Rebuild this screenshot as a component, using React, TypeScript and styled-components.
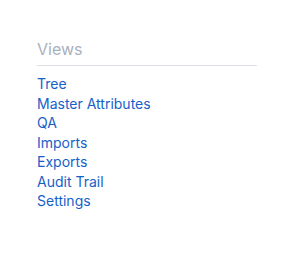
import styled, { createGlobalStyle } from "styled-components";

const GlobalStyle = createGlobalStyle`
  body {
    margin: 0;
    background: #ffffff;
    font-family: Inter, "Noto Sans", sans-serif;
  }
`;

const links = [
  "Tree",
  "Master Attributes",
  "QA",
  "Imports",
  "Exports",
  "Audit Trail",
  "Settings",
];

const App = () => {
  return (
    <>
      <GlobalStyle />
      <Panel>
        <Title>Views</Title>
        <Divider />
        <List>
          {links.map((l) => (
            <Item key={l}>
              <NavLink href="#">{l}</NavLink>
            </Item>
          ))}
        </List>
      </Panel>
    </>
  );
};

export default App;

const Panel = styled.div`
  width: 220px;
  padding: 39px 0 0 37px;
`;

const Title = styled.div`
  font-size: 16px;
  line-height: 20px;
  font-weight: 400;
  color: #a9b1bf;
`;

const Divider = styled.div`
  height: 1px;
  background-color: #dcdfe4;
  margin: 6px 0 8px;
`;

const List = styled.ul`
  list-style: none;
  margin: 0;
  padding: 0;
`;

const Item = styled.li`
  font-size: 14px;
  line-height: 19.5px;
`;

const NavLink = styled.a`
  color: #1661c9;
  text-decoration: none;

  :hover {
    text-decoration: underline;
  }
`;
